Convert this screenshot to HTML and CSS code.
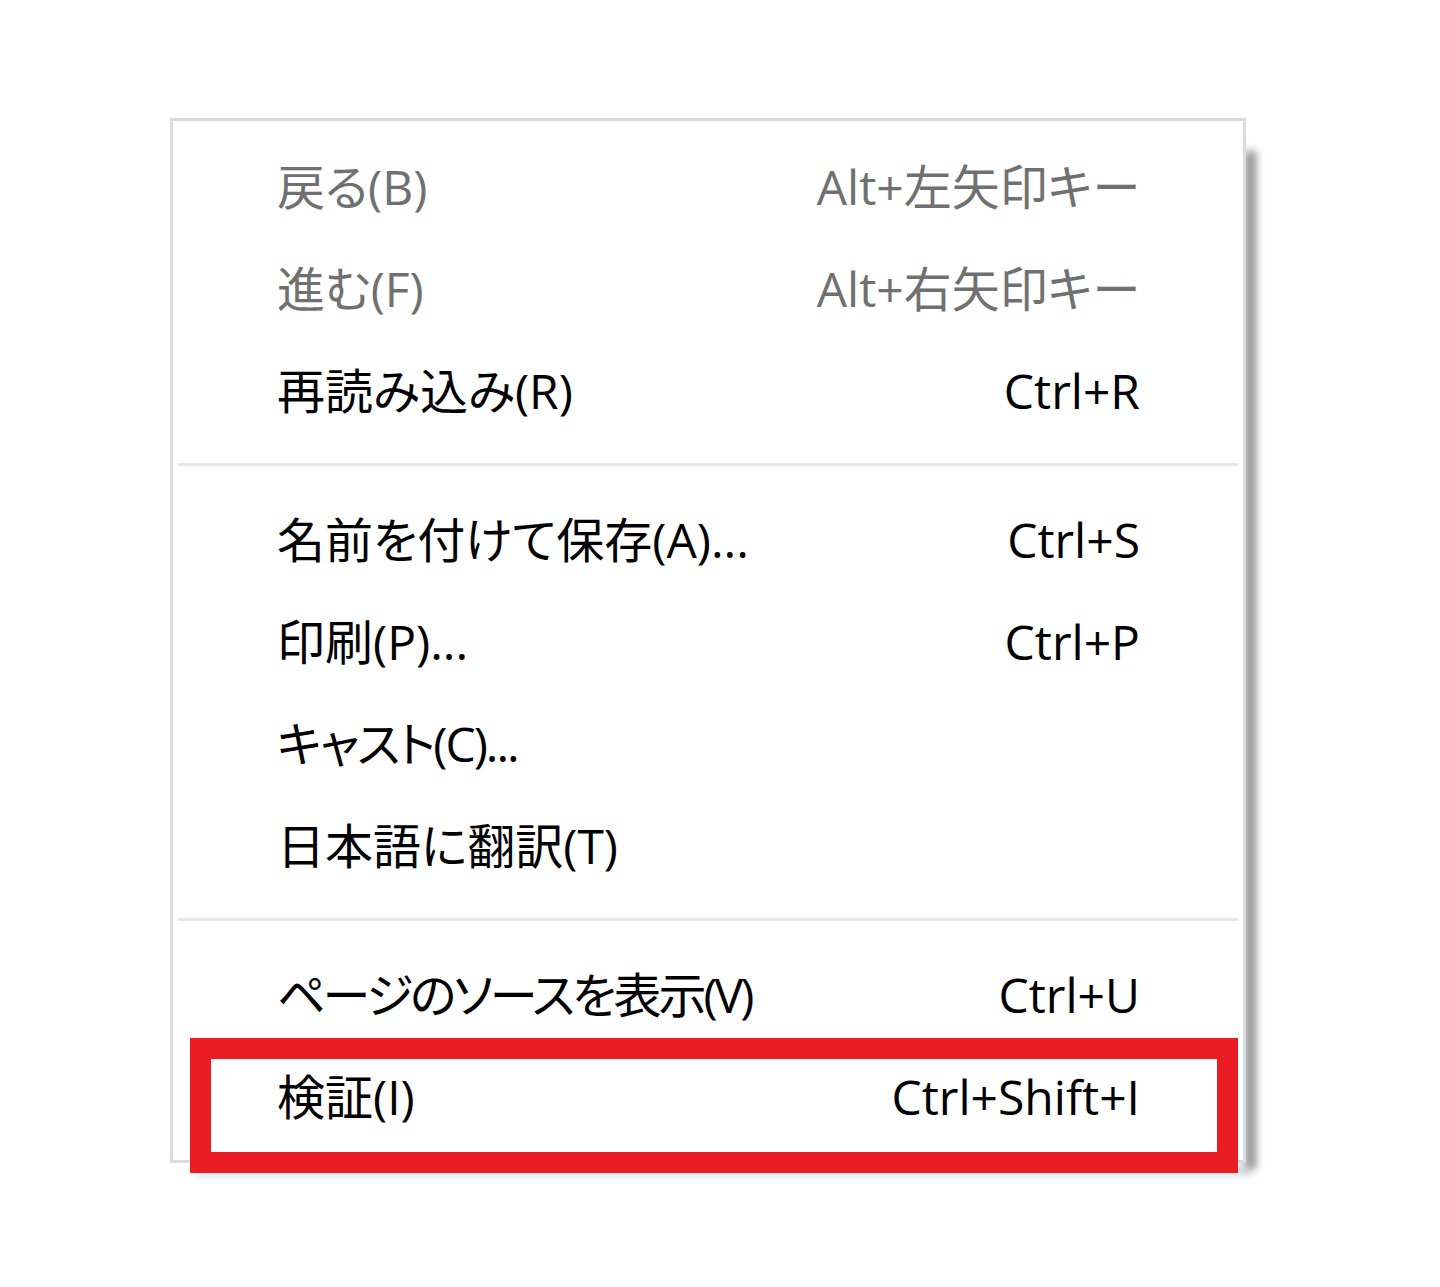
FILE: index.html
```html
<!DOCTYPE html>
<html lang="ja">
<head>
<meta charset="utf-8">
<title>コンテキストメニュー</title>
<link rel="stylesheet" href="styles.css">
</head>
<body>
<div class="stage">
  <div class="menu">
    <div class="item disabled"><span class="label">戻る(B)</span><span class="key">Alt+左矢印キー</span></div>
    <div class="item disabled"><span class="label">進む(F)</span><span class="key">Alt+右矢印キー</span></div>
    <div class="item"><span class="label">再読み込み(R)</span><span class="key">Ctrl+R</span></div>
    <div class="sep"></div>
    <div class="item"><span class="label">名前を付けて保存(A)...</span><span class="key">Ctrl+S</span></div>
    <div class="item"><span class="label">印刷(P)...</span><span class="key">Ctrl+P</span></div>
    <div class="item"><span class="label kana">キャスト(C)...</span></div>
    <div class="item"><span class="label">日本語に翻訳(T)</span></div>
    <div class="sep"></div>
    <div class="item"><span class="label kana long">ページのソースを表示(V)</span><span class="key">Ctrl+U</span></div>
    <div class="item marked"><span class="label">検証(I)</span><span class="key">Ctrl+Shift+I</span><div class="callout"></div></div>
  </div>
</div>
</body>
</html>
```

FILE: styles.css
```css
html {
  margin: 0;
  padding: 0;
  background: #ffffff;
}

body {
  margin: 0;
  padding: 0;
}

.stage {
  padding: 118px 0 124px 170px;
  font-family: "Open Sans", "Noto Sans CJK JP", sans-serif;
}

.menu {
  position: relative;
  width: 1070px;
  border: 3px solid #dadbe0;
  background: #ffffff;
  padding: 18px 0 9px 0;
  font-feature-settings: "palt";
}

.menu::after {
  content: "";
  position: absolute;
  top: 30px;
  right: -13px;
  bottom: -9px;
  width: 11px;
  background: #8c8c8c;
  filter: blur(4px);
  z-index: -1;
}

.menu::before {
  content: "";
  position: absolute;
  left: 24px;
  right: -8px;
  bottom: -16px;
  height: 10px;
  background: #d9dde0;
  filter: blur(4px);
  z-index: -1;
}

.item {
  position: relative;
  box-sizing: border-box;
  display: flex;
  align-items: center;
  justify-content: space-between;
  height: 102px;
  padding: 0 103px 6px 104px;
  font-size: 48px;
  color: #000000;
  line-height: 1;
}

.item.disabled {
  color: #707070;
}

.label, .key {
  white-space: nowrap;
}

.kana {
  letter-spacing: -2px;
}

.kana.long {
  letter-spacing: -3px;
}

.sep {
  height: 3px;
  margin: 18px 5px 26px 5px;
  background: #e6e7ea;
}

.callout {
  position: absolute;
  top: -11px;
  left: 17px;
  right: 5px;
  bottom: -22px;
  border: 21px solid #ec1c24;
}
```
